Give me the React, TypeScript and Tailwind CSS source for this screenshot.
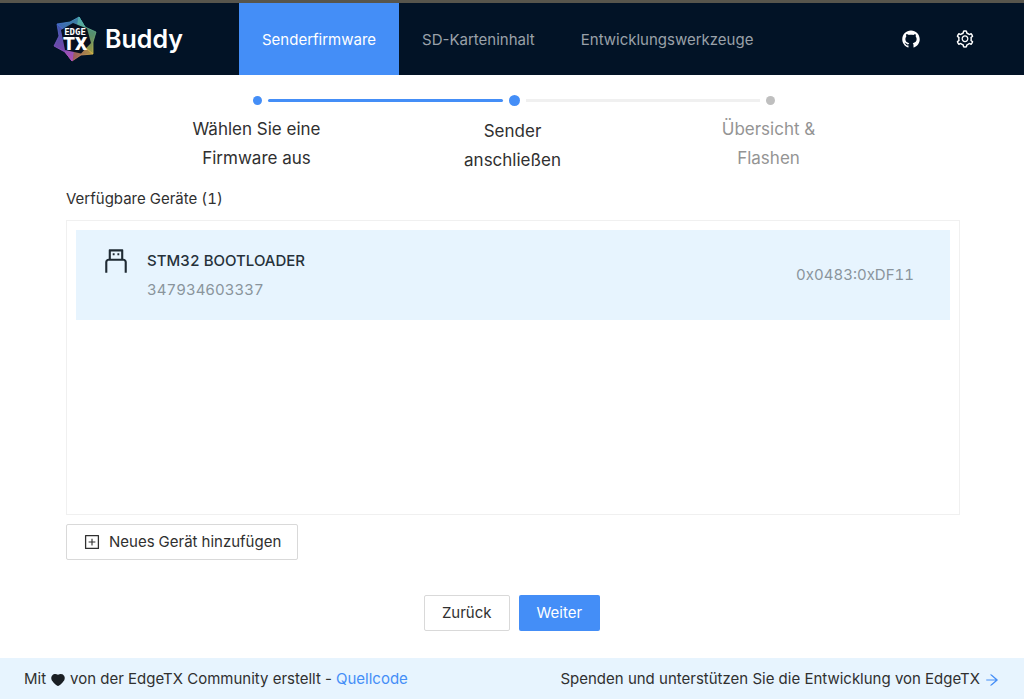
import { AiOutlineSetting, AiFillGithub, AiOutlineUsb, AiOutlinePlusSquare, AiFillHeart, AiOutlineArrowRight } from "react-icons/ai";

function Logo() {
  return (
    <svg viewBox="0 0 44 46" className="h-[46px] w-11" aria-hidden="true">
      <defs>
        <linearGradient id="lg-a" x1="0" y1="0" x2="1" y2="0">
          <stop offset="0" stopColor="#4a78d8" />
          <stop offset="1" stopColor="#4fa8b8" />
        </linearGradient>
        <linearGradient id="lg-b" x1="0" y1="0" x2="0" y2="1">
          <stop offset="0" stopColor="#4fb5b4" />
          <stop offset="0.5" stopColor="#6fae7a" />
          <stop offset="1" stopColor="#c9b94a" />
        </linearGradient>
        <linearGradient id="lg-c" x1="0" y1="0" x2="1" y2="0">
          <stop offset="0" stopColor="#b8507c" />
          <stop offset="1" stopColor="#d8b848" />
        </linearGradient>
        <linearGradient id="lg-d" x1="0" y1="0" x2="0" y2="1">
          <stop offset="0" stopColor="#4668cc" />
          <stop offset="1" stopColor="#b04cc8" />
        </linearGradient>
      </defs>
      <g strokeWidth="0.8" strokeLinejoin="round" fillOpacity="0.8">
        <path d="M4 8 17 6 26 1 32 11 22 23Z" fill="url(#lg-a)" stroke="url(#lg-a)" />
        <path d="M26 1 32 11 43 16 40 26 40 38 22 23Z" fill="url(#lg-b)" stroke="url(#lg-b)" />
        <path d="M40 38 28 39 19 45 12 36 22 23Z" fill="url(#lg-c)" stroke="url(#lg-c)" />
        <path d="M19 45 12 36 1 30 6 20 4 8 22 23Z" fill="url(#lg-d)" stroke="url(#lg-d)" />
      </g>
      <path d="M8 14 20 7 34 12.500 38 27 28 37.500 12 34Z" fill="#07101f" />
      <text x="22" y="19" textAnchor="middle" fontFamily="DejaVu Sans Mono, monospace" fontWeight="700" fontSize="9" fill="#fff">EDGE</text>
      <text x="22" y="33.500" textAnchor="middle" fontFamily="Roboto, sans-serif" fontWeight="900" fontSize="19" fill="#fff">TX</text>
    </svg>
  );
}

const steps = [
  { lines: ["Wählen Sie eine", "Firmware aus"], state: "done" },
  { lines: ["Sender", "anschließen"], state: "active" },
  { lines: ["Übersicht &", "Flashen"], state: "wait" },
];

function Steps() {
  return (
    <ol className="grid grid-cols-3 pt-[19px] pr-[126px] pl-[130px] text-center text-[17px] leading-[29px]">
      {steps.map((s, i) => (
        <li key={s.lines[0]} aria-current={s.state === "active" ? "step" : undefined}>
          <div className="flex h-3 items-center gap-[5px]">
            <span className={`h-[3px] flex-1 ${i === 0 ? "" : i === 1 ? "mr-px rounded-r bg-[#448ef7]" : "mr-px bg-[#f0f0f0]"}`} />
            <span className={`rounded-full ${s.state === "active" ? "size-[11px] bg-[#448ef7]" : s.state === "done" ? "size-[9px] bg-[#448ef7]" : "size-[9px] bg-[#bfbfbf]"}`} />
            <span className={`h-[3px] flex-1 ${i === 0 ? "ml-px rounded-l bg-[#448ef7]" : i === 1 ? "ml-px bg-[#f0f0f0]" : "ml-px"}`} />
          </div>
          <p className={`pr-[3px] ${s.state === "active" ? "mt-[11px] text-[#303030]" : s.state === "done" ? "mt-[9px] text-[#303030]" : "mt-[9px] text-[#949494]"}`}>
            {s.lines[0]}<br />{s.lines[1]}
          </p>
        </li>
      ))}
    </ol>
  );
}

export default function App() {
  return (
    <div className="flex min-h-screen flex-col bg-white font-['Inter',sans-serif] text-[15px] text-[#303030]">
      <header className="flex h-[75px] border-t-[3px] border-[#57554c] bg-[#021326]">
        <div className="flex w-[239px] items-center gap-2 pl-[53px] text-[25px] font-semibold text-white">
          <Logo />
          <span className="pt-0.5">Buddy</span>
        </div>
        <nav className="flex">
          <a href="#firmware" aria-current="page" className="flex items-center bg-[#448ef7] px-[23px] pt-0.5 text-white">Senderfirmware</a>
          <a href="#sdcard" className="flex items-center px-[23px] pt-0.5 text-[#9aa1a9]">SD-Karteninhalt</a>
          <a href="#dev" className="flex items-center px-[23px] pt-0.5 text-[#9aa1a9]">Entwicklungswerkzeuge</a>
        </nav>
        <div className="ml-auto flex items-center gap-[34px] pr-[49px] text-white">
          <a href="#github" aria-label="GitHub"><AiFillGithub size={20} /></a>
          <button aria-label="Einstellungen"><AiOutlineSetting size={20} /></button>
        </div>
      </header>

      <main className="flex flex-1 flex-col">
        <Steps />
        <section className="flex flex-1 flex-col items-start pt-3 pr-16 pl-[66px] tabular-nums">
          <h2 className="leading-6">Verfügbare Geräte (1)</h2>
          <ul className="mt-[9px] w-full flex-1 border border-[#f0f0f0] p-[9px]">
            <li className="flex items-center bg-[#e7f4fe] py-4 pr-9 pl-[25px]">
              <AiOutlineUsb size={30} className="mr-4 self-start text-[#1f2a33]" />
              <div className="leading-[29px]">
                <p className="font-medium text-[#26313a]">STM32 BOOTLOADER</p>
                <p className="text-[#8a949c]">347934603337</p>
              </div>
              <span className="ml-auto text-[#8a949c]">0x0483:0xDF11</span>
            </li>
          </ul>
          <button className="mt-[9px] flex h-9 items-center gap-2 rounded-xs border border-[#d9d9d9] px-4">
            <AiOutlinePlusSquare size={18} />
            Neues Gerät hinzufügen
          </button>
        </section>
        <div className="flex justify-center gap-[9px] pt-[35px] pb-[27px]">
          <button className="h-9 rounded-xs border border-[#d9d9d9] px-[17px]">Zurück</button>
          <button className="h-9 rounded-xs bg-[#448ef7] px-[18px] text-white">Weiter</button>
        </div>
      </main>

      <footer className="flex h-[41px] items-center justify-between bg-[#e7f4fe] px-6 pt-0.5">
        <p className="flex items-center gap-1">
          Mit <AiFillHeart size={16} className="text-[#1a1f24]" /> von der EdgeTX Community erstellt - <a href="#source" className="text-[#448ef7]">Quellcode</a>
        </p>
        <a href="#donate" className="flex items-center gap-1">
          Spenden und unterstützen Sie die Entwicklung von EdgeTX <AiOutlineArrowRight size={16} className="text-[#448ef7]" />
        </a>
      </footer>
    </div>
  );
}
